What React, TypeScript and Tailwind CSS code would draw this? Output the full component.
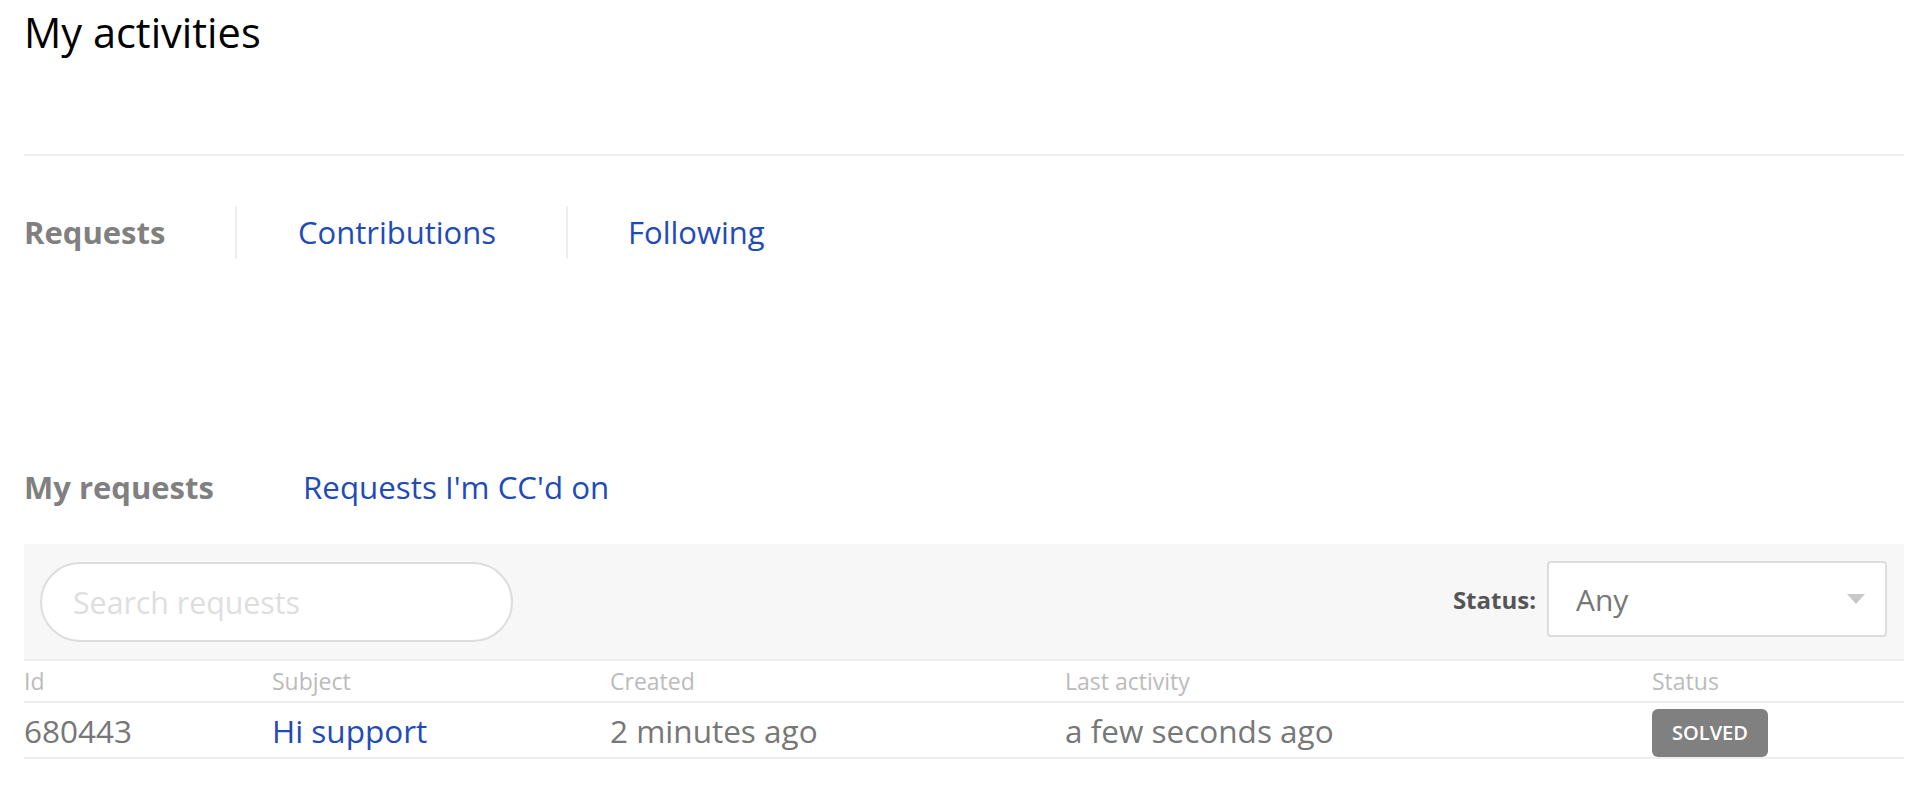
export default function App() {
  return (
    <div className="min-h-[795px] bg-white pl-[24px] pr-[20px] font-['Open_Sans',sans-serif]">
      <h1 className="pt-[8px] text-[41.5px] leading-[48px] font-normal text-black">My activities</h1>
      <div className="mt-[98px] h-[2px] bg-[#eeeeee]" />
      <nav className="mt-[50px] flex h-[53px] text-[31px] leading-[53px]">
        <div className="w-[213px] shrink-0 border-r-2 border-[#eeeeee] font-bold text-[#808080]">Requests</div>
        <a href="#" className="w-[331px] shrink-0 border-r-2 border-[#eeeeee] pl-[61px] text-[#1f4bb8]">
          Contributions
        </a>
        <a href="#" className="pl-[60px] text-[#1f4bb8]">
          Following
        </a>
      </nav>
      <div className="mt-[206px] flex h-[44px] text-[31px] leading-[44px]">
        <div className="w-[279px] shrink-0 font-bold text-[#808080]">My requests</div>
        <a href="#" className="text-[31.3px] text-[#1f4bb8]">
          Requests I'm CC'd on
        </a>
      </div>
      <div className="mt-[35px] flex h-[117px] items-start justify-between border-b-2 border-[#eeeeee] bg-[#f7f7f7] pl-[16px] pr-[17px] pt-[18px]">
        <input
          type="text"
          placeholder="Search requests"
          className="h-[80px] w-[473px] rounded-full border-2 border-[#dddddd] bg-white pl-[31px] text-[30.3px] text-[#555] outline-none placeholder:text-[#dedede]"
        />
        <div className="flex items-center">
          <span className="mr-[11px] text-[24px] font-bold text-[#555555]">Status:</span>
          <div className="-mt-[1px] flex h-[76px] w-[340px] items-center justify-between rounded-[4px] border-2 border-[#dddddd] bg-white pl-[27px] pr-[20px]">
            <span className="text-[30px] text-[#777777]">Any</span>
            <svg width="18" height="10" viewBox="0 0 18 10">
              <path d="M0 0 L18 0 L9 10 Z" fill="#c8c8c8" />
            </svg>
          </div>
        </div>
      </div>
      <div className="grid h-[42px] grid-cols-[248px_338px_455px_587px_1fr] items-center border-b-2 border-[#eeeeee] text-[23px] text-[#bbbbbb]">
        <div>Id</div>
        <div>Subject</div>
        <div>Created</div>
        <div>Last activity</div>
        <div>Status</div>
      </div>
      <div className="grid h-[56px] grid-cols-[248px_338px_455px_587px_1fr] items-center border-b-2 border-[#eeeeee] pt-[4px] text-[31.5px] text-[#777777]">
        <div className="-mt-[2px]">680443</div>
        <div className="-mt-[2px]">
          <a href="#" className="text-[#1f4bb8]">
            Hi support
          </a>
        </div>
        <div className="-mt-[2px]">2 minutes ago</div>
        <div className="-mt-[2px]">a few seconds ago</div>
        <div className="pt-[2px]">
          <span className="flex h-[48px] w-[116px] items-center justify-center rounded-[6px] bg-[#808080] text-[20px] font-semibold text-white">
            SOLVED
          </span>
        </div>
      </div>
    </div>
  );
}
